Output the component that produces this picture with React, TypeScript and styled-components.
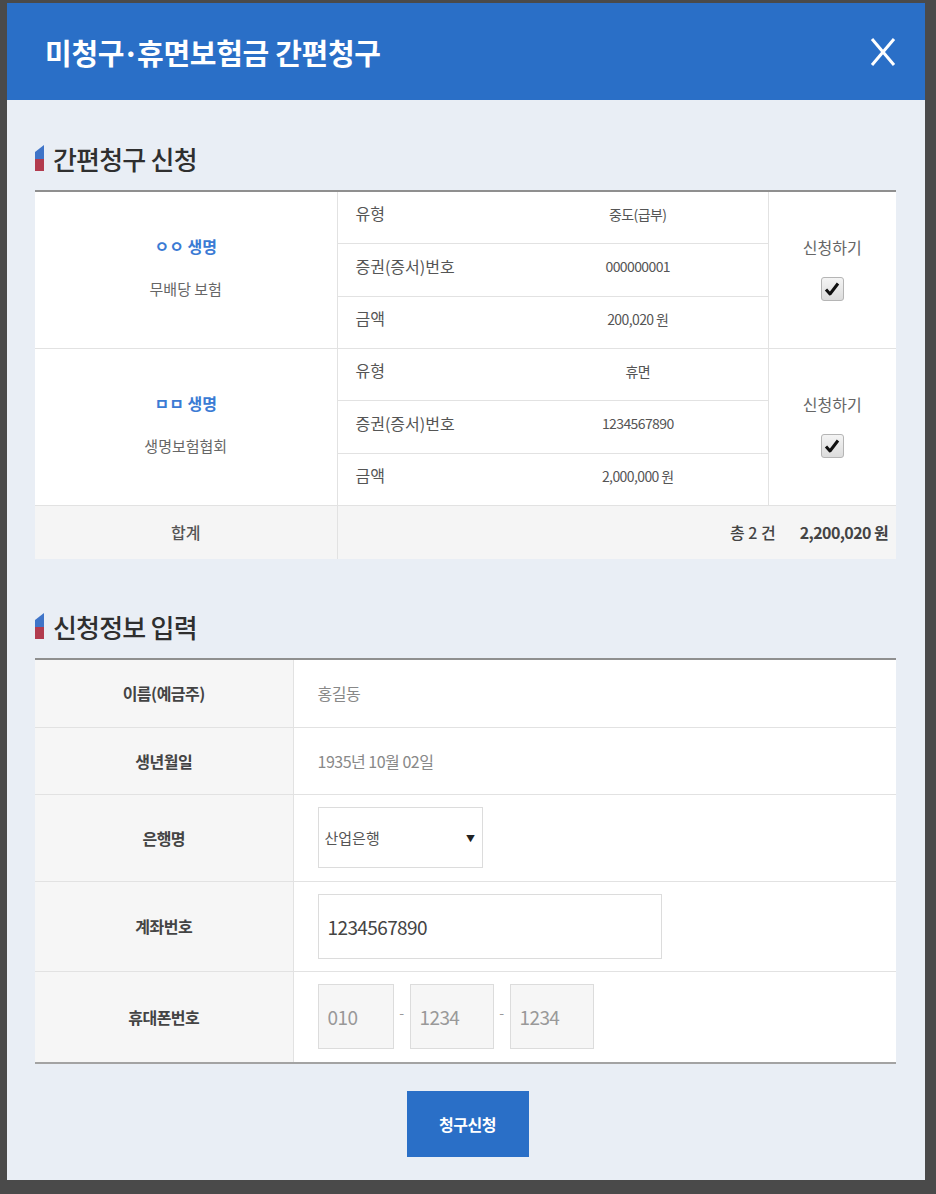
import React from 'react';
import styled, { createGlobalStyle } from 'styled-components';

const GlobalStyle = createGlobalStyle`
  html, body {
    margin: 0;
    padding: 0;
    background: #4a4a4a;
  }
  body {
    font-family: 'Noto Sans CJK KR', 'Noto Sans', sans-serif;
  }
  * {
    box-sizing: border-box;
  }
`;

interface Claim {
  company: string;
  product: string;
  type: string;
  policyNo: string;
  amount: string;
}

const claims: Claim[] = [
  { company: 'ㅇㅇ 생명', product: '무배당 보험', type: '중도(급부)', policyNo: '000000001', amount: '200,020 원' },
  { company: 'ㅁㅁ 생명', product: '생명보험협회', type: '휴면', policyNo: '1234567890', amount: '2,000,000 원' },
];

const SectionMark = () => (
  <svg width="9" height="26" viewBox="0 0 9 26">
    <polygon points="0,7 9,0 9,14 0,14" fill="#3f74c8" />
    <polygon points="0,14 9,14 9,26 0,26" fill="#b23b4e" />
  </svg>
);

const CloseIcon = () => (
  <svg width="30" height="30" viewBox="0 0 30 30">
    <line x1="4" y1="2" x2="26" y2="28" stroke="#fff" strokeWidth="3" />
    <line x1="26" y1="2" x2="4" y2="28" stroke="#fff" strokeWidth="3" />
  </svg>
);

const CheckBox = () => (
  <Check>
    <svg width="16" height="16" viewBox="0 0 16 16">
      <path d="M2 8.5 L6 13 L14 2.5" stroke="#111" strokeWidth="3" fill="none" strokeLinejoin="round" />
    </svg>
  </Check>
);

const claimGroup = (claim: Claim, index: number) => (
  <React.Fragment key={index}>
    <tr>
      <CompanyCell rowSpan={3}>
        <CompanyName>{claim.company}</CompanyName>
        <ProductName>{claim.product}</ProductName>
      </CompanyCell>
      <LabelCell $height={52}>유형</LabelCell>
      <ValueCell $height={52}>{claim.type}</ValueCell>
      <ApplyCell rowSpan={3}>
        <ApplyText>신청하기</ApplyText>
        <CheckBox />
      </ApplyCell>
    </tr>
    <tr>
      <LabelCell $height={53}>증권(증서)번호</LabelCell>
      <ValueCell $height={53}>{claim.policyNo}</ValueCell>
    </tr>
    <tr>
      <LabelCell $height={52}>금액</LabelCell>
      <ValueCell $height={52}>{claim.amount}</ValueCell>
    </tr>
  </React.Fragment>
);

const App: React.FC = () => {
  return (
    <>
      <GlobalStyle />
      <Page>
        <Modal>
          <Header>
            <Title>
              미청구<Dot>·</Dot>휴면보험금 간편청구
            </Title>
            <CloseButton aria-label="닫기">
              <CloseIcon />
            </CloseButton>
          </Header>
          <Body>
            <SectionTitle>
              <SectionMark />
              간편청구 신청
            </SectionTitle>
            <ClaimTable>
              <colgroup>
                <col style={{ width: 302 }} />
                <col style={{ width: 171 }} />
                <col style={{ width: 260 }} />
                <col style={{ width: 128 }} />
              </colgroup>
              <tbody>
                {claims.map(claimGroup)}
                <TotalRow>
                  <TotalLabel>합계</TotalLabel>
                  <TotalValue colSpan={3}>
                    <span>총 2 건</span>
                    <strong>2,200,020 원</strong>
                  </TotalValue>
                </TotalRow>
              </tbody>
            </ClaimTable>

            <SectionTitle $spaced>
              <SectionMark />
              신청정보 입력
            </SectionTitle>
            <FormTable>
              <colgroup>
                <col style={{ width: 258 }} />
                <col />
              </colgroup>
              <tbody>
                <FormRow $height={68}>
                  <FormLabel>이름(예금주)</FormLabel>
                  <FormValue>홍길동</FormValue>
                </FormRow>
                <FormRow $height={67}>
                  <FormLabel>생년월일</FormLabel>
                  <FormValue>1935년 10월 02일</FormValue>
                </FormRow>
                <FormRow $height={87}>
                  <FormLabel>은행명</FormLabel>
                  <FormValue>
                    <SelectWrap>
                      <BankSelect defaultValue="kdb">
                        <option value="kdb">산업은행</option>
                        <option value="kb">국민은행</option>
                        <option value="shinhan">신한은행</option>
                      </BankSelect>
                      <SelectArrow>▼</SelectArrow>
                    </SelectWrap>
                  </FormValue>
                </FormRow>
                <FormRow $height={90}>
                  <FormLabel>계좌번호</FormLabel>
                  <FormValue>
                    <AccountInput defaultValue="1234567890" />
                  </FormValue>
                </FormRow>
                <FormRow $height={92}>
                  <FormLabel>휴대폰번호</FormLabel>
                  <FormValue>
                    <PhoneGroup>
                      <PhoneInput $width={76} defaultValue="010" />
                      <Dash>-</Dash>
                      <PhoneInput $width={84} defaultValue="1234" />
                      <Dash>-</Dash>
                      <PhoneInput $width={84} defaultValue="1234" />
                    </PhoneGroup>
                  </FormValue>
                </FormRow>
              </tbody>
            </FormTable>

            <Actions>
              <SubmitButton>청구신청</SubmitButton>
            </Actions>
          </Body>
        </Modal>
      </Page>
    </>
  );
};

export default App;

const Page = styled.div`
  padding: 3px 11px 14px 7px;
  min-height: 1194px;
`;

const Modal = styled.div`
  width: 918px;
  height: 1177px;
  background: #e9eef5;
  display: flex;
  flex-direction: column;
`;

const Header = styled.div`
  height: 97px;
  background: #2a6fc7;
  display: flex;
  align-items: center;
  justify-content: space-between;
  padding: 0 25px 0 38px;
`;

const Title = styled.h1`
  margin: 0;
  color: #fff;
  font-size: 29px;
  font-weight: 700;
  letter-spacing: -0.3px;
`;

const Dot = styled.span`
  display: inline-block;
  margin: 0 -2px;
`;

const CloseButton = styled.button`
  border: 0;
  background: transparent;
  padding: 0;
  width: 34px;
  height: 34px;
  display: flex;
  align-items: center;
  justify-content: center;
  cursor: pointer;
`;

const Body = styled.div`
  padding: 41px 29px 0 28px;
  display: flex;
  flex-direction: column;
`;

const SectionTitle = styled.h2<{ $spaced?: boolean }>`
  margin: ${p => (p.$spaced ? '50px' : '0')} 0 15px;
  height: 34px;
  display: flex;
  align-items: center;
  gap: 9px;
  color: #2f2f2f;
  font-size: 26px;
  font-weight: 500;
  letter-spacing: -0.8px;
`;

const ClaimTable = styled.table`
  width: 861px;
  border-collapse: collapse;
  table-layout: fixed;
  background: #fff;
  border-top: 2px solid #8f8f8f;
  font-size: 15px;
  color: #555;
`;

const CompanyCell = styled.td`
  text-align: center;
  vertical-align: middle;
  border-bottom: 1px solid #e2e2e2;
  border-right: 1px solid #e2e2e2;
  padding-bottom: 8px;
`;

const CompanyName = styled.div`
  color: #3b7bd4;
  font-weight: 700;
  font-size: 16px;
  margin-bottom: 20px;
`;

const ProductName = styled.div`
  color: #666;
  font-size: 15px;
`;

const LabelCell = styled.td<{ $height: number }>`
  height: ${p => p.$height}px;
  padding: 0 0 8px 18px;
  border-bottom: 1px solid #e2e2e2;
  color: #555;
  font-size: 16px;
`;

const ValueCell = styled.td<{ $height: number }>`
  height: ${p => p.$height}px;
  padding-bottom: 8px;
  text-align: center;
  border-bottom: 1px solid #e2e2e2;
  border-right: 1px solid #e2e2e2;
  color: #555;
  font-size: 14px;
  letter-spacing: -0.6px;
`;

const ApplyCell = styled.td`
  text-align: center;
  vertical-align: middle;
  border-bottom: 1px solid #e2e2e2;
  padding-bottom: 4px;
`;

const ApplyText = styled.div`
  font-size: 16px;
  color: #666;
  margin-bottom: 18px;
`;

const Check = styled.span`
  display: inline-flex;
  align-items: center;
  justify-content: center;
  width: 23px;
  height: 24px;
  border: 1px solid #b5b5b5;
  border-radius: 3px;
  background: linear-gradient(#f4f4f4, #dcdcdc);
`;

const TotalRow = styled.tr`
  background: #f5f5f5;
  height: 54px;
`;

const TotalLabel = styled.td`
  text-align: center;
  border-right: 1px solid #e2e2e2;
  font-size: 16px;
  color: #555;
  font-weight: 500;
`;

const TotalValue = styled.td`
  text-align: right;
  padding-right: 8px;
  font-size: 16px;
  color: #444;
  span {
    font-weight: 500;
    margin-right: 24px;
  }
  strong {
    font-weight: 700;
    letter-spacing: -0.6px;
  }
`;

const FormTable = styled.table`
  width: 861px;
  border-collapse: collapse;
  table-layout: fixed;
  background: #fff;
  border-top: 2px solid #8f8f8f;
  border-bottom: 2px solid #a3a3a3;
`;

const FormRow = styled.tr<{ $height: number }>`
  height: ${p => p.$height}px;
  border-bottom: 1px solid #e2e2e2;
  &:last-child {
    border-bottom: 0;
  }
`;

const FormLabel = styled.td`
  background: #f6f6f6;
  border-right: 1px solid #e2e2e2;
  text-align: center;
  font-size: 16px;
  font-weight: 700;
  color: #444;
  letter-spacing: -0.5px;
`;

const FormValue = styled.td`
  padding-left: 24px;
  font-size: 16px;
  color: #888;
  letter-spacing: -0.5px;
`;

const SelectWrap = styled.div`
  position: relative;
  width: 165px;
  height: 61px;
`;

const BankSelect = styled.select`
  appearance: none;
  width: 100%;
  height: 100%;
  border: 1px solid #dcdcdc;
  background: #fff;
  padding: 0 24px 0 6px;
  font-family: 'Noto Sans CJK KR', sans-serif;
  font-size: 15px;
  color: #555;
  border-radius: 0;
  outline: none;
`;

const SelectArrow = styled.span`
  position: absolute;
  right: 8px;
  top: 50%;
  transform: translateY(-50%);
  font-size: 9px;
  color: #222;
  pointer-events: none;
`;

const AccountInput = styled.input`
  width: 344px;
  height: 65px;
  border: 1px solid #dcdcdc;
  padding: 0 9px;
  font-family: 'Noto Sans CJK KR', sans-serif;
  font-size: 19px;
  color: #444;
  letter-spacing: -0.6px;
  outline: none;
`;

const PhoneGroup = styled.div`
  display: flex;
  align-items: center;
`;

const PhoneInput = styled.input<{ $width: number }>`
  width: ${p => p.$width}px;
  height: 65px;
  border: 1px solid #dcdcdc;
  background: #f6f6f6;
  padding: 0 9px;
  font-family: 'Noto Sans CJK KR', sans-serif;
  font-size: 19px;
  color: #999;
  letter-spacing: -0.6px;
  outline: none;
`;

const Dash = styled.span`
  width: 16px;
  text-align: center;
  color: #999;
  font-size: 14px;
  margin-top: -10px;
`;

const Actions = styled.div`
  display: flex;
  justify-content: center;
  margin-top: 27px;
  padding-left: 4px;
`;

const SubmitButton = styled.button`
  width: 122px;
  height: 66px;
  border: 0;
  background: #2a6fc7;
  color: #fff;
  font-family: 'Noto Sans CJK KR', sans-serif;
  font-size: 16px;
  font-weight: 700;
  letter-spacing: -0.5px;
  cursor: pointer;
`;
